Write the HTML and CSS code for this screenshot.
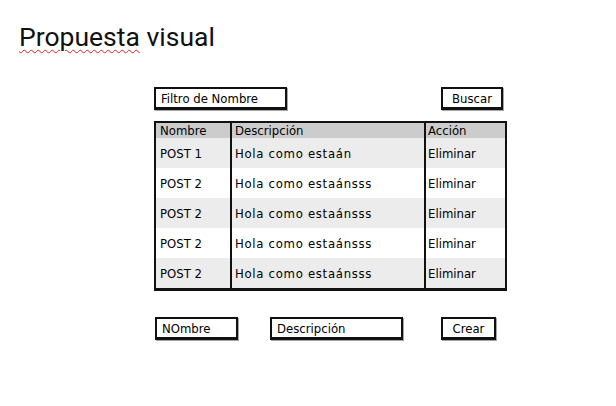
FILE: index.html
```html
<!DOCTYPE html>
<html lang="es">
<head>
<meta charset="utf-8">
<link rel="stylesheet" href="styles.css">
</head>
<body>
<div class="page">
  <h1 class="title"><span class="misspelled">Propuesta</span> visual</h1>
  <div class="content">
    <div class="filter-row">
      <div class="field field-filter">Filtro de Nombre</div>
      <div class="btn btn-buscar">Buscar</div>
    </div>
    <div class="table">
      <div class="row head">
        <div class="cell c1">Nombre</div>
        <div class="cell c2">Descripción</div>
        <div class="cell c3">Acción</div>
      </div>
      <div class="row alt">
        <div class="cell c1">POST 1</div>
        <div class="cell c2">Hola como estaán</div>
        <div class="cell c3">Eliminar</div>
      </div>
      <div class="row">
        <div class="cell c1">POST 2</div>
        <div class="cell c2">Hola como estaánsss</div>
        <div class="cell c3">Eliminar</div>
      </div>
      <div class="row alt">
        <div class="cell c1">POST 2</div>
        <div class="cell c2">Hola como estaánsss</div>
        <div class="cell c3">Eliminar</div>
      </div>
      <div class="row">
        <div class="cell c1">POST 2</div>
        <div class="cell c2">Hola como estaánsss</div>
        <div class="cell c3">Eliminar</div>
      </div>
      <div class="row alt">
        <div class="cell c1">POST 2</div>
        <div class="cell c2">Hola como estaánsss</div>
        <div class="cell c3">Eliminar</div>
      </div>
    </div>
    <div class="create-row">
      <div class="field field-nombre">NOmbre</div>
      <div class="field field-desc">Descripción</div>
      <div class="btn btn-crear">Crear</div>
    </div>
  </div>
</div>
</body>
</html>
```

FILE: styles.css
```css
* { box-sizing: border-box; }
html, body { margin: 0; padding: 0; background: #fff; }
body { width: 616px; height: 406px; overflow: hidden; }
.page { padding: 21px 0 0 19px; }
.title {
  margin: 0;
  font-family: Roboto, "Liberation Sans", sans-serif;
  font-weight: 400;
  font-size: 26.5px;
  line-height: 32px;
  color: #111;
}
.misspelled {
  text-decoration: underline wavy #e02020;
  text-decoration-thickness: 1px;
  text-underline-offset: 3px;
}
.content {
  margin: 34px 0 0 135px;
  width: 353px;
  font-family: "DejaVu Sans Condensed", "DejaVu Sans", sans-serif;
  font-size: 13px;
  color: #000;
}
.filter-row {
  display: flex;
  justify-content: space-between;
  padding-right: 4px;
}
.field, .btn {
  height: 23px;
  border: 2px solid #111;
  border-bottom-width: 3px;
  background: #fff;
  display: flex;
  align-items: center;
  line-height: 1;
  box-shadow: 1px 1px 0 rgba(0,0,0,0.35);
}
.field { padding-left: 5px; }
.btn { justify-content: center; }
.field-filter { width: 133px; }
.btn-buscar { width: 62px; }
.table {
  margin-top: 11px;
  border: 2px solid #111;
  border-bottom-width: 3px;
  width: 353px;
}
.row { display: flex; height: 30px; background: #fff; }
.row.alt { background: #ececec; }
.row.head { height: 15px; background: #cccccc; }
.cell {
  display: flex;
  align-items: center;
  padding-left: 4px;
  white-space: nowrap;
}
.c1 { width: 76px; border-right: 2px solid #111; }
.c2 { width: 194px; border-right: 2px solid #111; padding-left: 3px; }
.row:not(.head) .c2 { letter-spacing: 0.7px; }
.c3 { flex: 1; padding-left: 2px; }
.create-row {
  margin-top: 26px;
  display: flex;
}
.field-nombre { width: 83px; margin-left: 1px; }
.field-desc { width: 133px; margin-left: 32px; }
.btn-crear { width: 55px; margin-left: 38px; }
```
